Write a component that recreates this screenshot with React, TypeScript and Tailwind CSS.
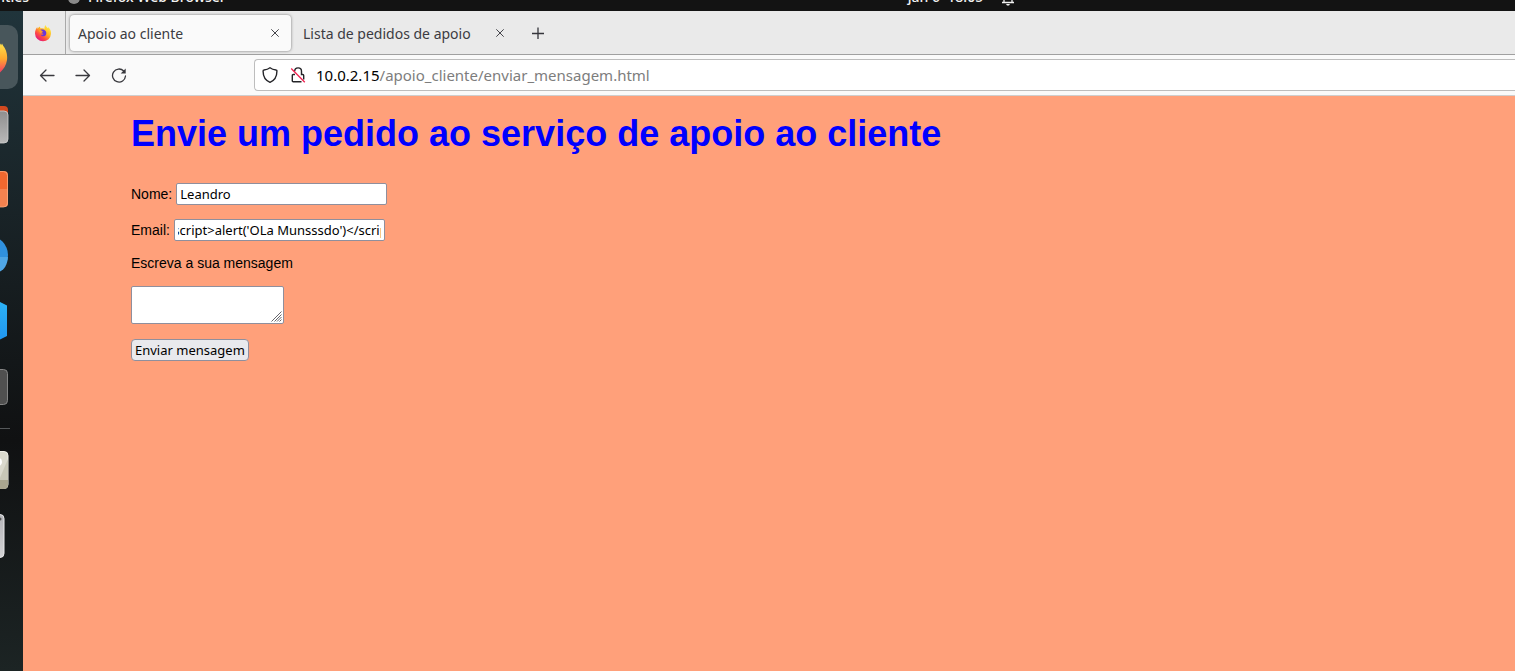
import { useLayoutEffect, useRef, type ReactNode } from "react";

function FirefoxLogo() {
  return (
    <svg width="18" height="18" viewBox="0 0 18 18" aria-hidden="true">
      <defs>
        <linearGradient id="flame" x1="0.85" y1="0.1" x2="0.2" y2="0.95">
          <stop offset="0" stopColor="#fff04a" />
          <stop offset="0.4" stopColor="#ffb01f" />
          <stop offset="0.7" stopColor="#ff4a44" />
          <stop offset="1" stopColor="#e01583" />
        </linearGradient>
      </defs>
      <path
        d="M11.600 1c.1 1.500 1.500 2.300 2.300 3.300.3-.3.400-.8.300-1.300 2 1.800 3 4 2.800 6.800A8 8 0 0 1 9 17.300 8 8 0 0 1 1 9.400c0-2.700 1-4.500 2.300-6.300 0 .9.100 1.300.400 1.700C4.500 3.500 5.200 3 6 2.500c-.1.800.2 1.500.6 1.900 1.500-.3 3-.3 4 .4-.2-1.500.1-2.800 1-3.800z"
        fill="url(#flame)"
      />
      <path d="M6 6c2-.9 4.700-.5 5.800 1.200.9 1.600.6 3.600-.7 4.500-1.700 1-3.900.4-4.500-1 1.300.4 2.300-.1 3-.8-.6-.4-1.600-.2-2.200-.7-.2-.8.600-1.200 1.300-1.400-.8-.7-1.800-.8-2.700-1.800z" fill="#6b35d9" />
      <path d="M4 5.300c1.200-.5 2.800 0 3.800 1.600L9.200 8c-1 .3-2 .8-2.100 1.500-1-.9-2.300-2.200-3.100-4.200z" fill="#ff9a2b" />
    </svg>
  );
}

function Cross() {
  return (
    <svg width="8" height="8" viewBox="0 0 8 8" fill="none" stroke="#45454b" strokeWidth="1" aria-hidden="true">
      <path d="M.3.3l7.400 7.400M7.700.3L.3 7.700" />
    </svg>
  );
}

function Arrow({ flip = false }: { flip?: boolean }) {
  return (
    <svg width="16" height="16" viewBox="0 0 16 16" fill="none" stroke="#38383d" strokeWidth="1.300" strokeLinecap="round" strokeLinejoin="round" aria-hidden="true">
      <path d={flip ? "M1 8.500h13.500M9 3L14.500 8.500 9 14" : "M15 8.500H1.500M7 3L1.500 8.500 7 14"} />
    </svg>
  );
}

function DockItem({ label, children }: { label: string; children: ReactNode }) {
  return (
    <button type="button" aria-label={label} className="block h-[66px] w-full shrink-0">
      <svg className="h-full w-full" viewBox="0 0 23 66" preserveAspectRatio="xMinYMin" aria-hidden="true">
        {children}
      </svg>
    </button>
  );
}

function Dock() {
  return (
    <nav aria-label="Dock" className="w-[23px] shrink-0 overflow-hidden bg-linear-to-b from-[#20343b] via-[#101112] via-65% to-[#1c2424] pt-[13px]">
      <svg width="0" height="0" className="absolute" aria-hidden="true">
        <defs>
          <linearGradient id="dockFlame" x1="0" y1="0" x2="0" y2="1">
            <stop offset="0" stopColor="#ffe14a" />
            <stop offset="0.5" stopColor="#ffa92e" />
            <stop offset="1" stopColor="#f5306a" />
          </linearGradient>
          <linearGradient id="files" x1="0" y1="0" x2="0" y2="1">
            <stop offset="0" stopColor="#8f8f8f" />
            <stop offset="1" stopColor="#b8b8b8" />
          </linearGradient>
          <linearGradient id="code" x1="0" y1="0" x2="0" y2="1">
            <stop offset="0" stopColor="#2cb2f5" />
            <stop offset="1" stopColor="#2196f0" />
          </linearGradient>
          <linearGradient id="disk" x1="0" y1="0" x2="0" y2="1">
            <stop offset="0" stopColor="#b4b4b8" />
            <stop offset="1" stopColor="#d2d2d4" />
          </linearGradient>
        </defs>
      </svg>
      <DockItem label="Firefox">
        <rect x="-40" y="1" width="58" height="64" rx="10" fill="#48565b" />
        <path d="M-2 23L.5 19.500l.5 2 1-2 1 2C6 25 7.700 30 7 36c-1 6-4 10.500-9 14z" fill="url(#dockFlame)" />
      </DockItem>
      <DockItem label="Files">
        <rect x="-20" y="16" width="28" height="30" rx="4" fill="#d2491f" />
        <rect x="-20" y="21" width="28" height="32" rx="4" fill="url(#files)" stroke="#d0d0d0" strokeWidth=".8" />
      </DockItem>
      <DockItem label="Software">
        <rect x="-20" y="15" width="28" height="36" rx="4" fill="#f1682f" />
        <path d="M-1 33h9v14a4 4 0 0 1-4 4h-5z" fill="#f4824f" />
        <rect x="-20" y="15.500" width="27.500" height="35.500" rx="4" fill="none" stroke="#f9ab80" strokeWidth=".8" />
      </DockItem>
      <DockItem label="Help">
        <circle cx="-11" cy="33" r="19" fill="#3091df" />
        <path d="M-1 35h8.900C7.500 43 4 48-1 50z" fill="#4fa6e6" />
      </DockItem>
      <DockItem label="Visual Studio Code">
        <path d="M-1 13.500l8 4v30.500l-8 4z" fill="url(#code)" />
      </DockItem>
      <DockItem label="Terminal">
        <rect x="-20" y="15.500" width="27.500" height="35" rx="4" fill="#505050" stroke="#858585" />
      </DockItem>
      <hr className="mt-2 mb-2 w-[10px] border-[#55585a]" />
      <DockItem label="Disks">
        <rect x="-20" y="14.500" width="28" height="37" rx="4" fill="#dad9cd" stroke="#f0efe8" />
        <path d="M-1 43L8 22v21z" fill="#c8c7b7" />
        <path d="M-1 43h9v5a4 4 0 0 1-4 4h-5z" fill="#a9a58f" />
        <circle cx="-2" cy="25" r="4" fill="#fff" />
      </DockItem>
      <DockItem label="Trash">
        <rect x="-20" y="11.500" width="24" height="43" rx="4" fill="url(#disk)" stroke="#e8e8ea" />
        <circle cx="0" cy="16" r="1.500" fill="#555" />
      </DockItem>
    </nav>
  );
}

function TopBar() {
  return (
    <header className="grid h-[11px] grid-cols-[1fr_auto_1fr] content-end overflow-hidden bg-[#131313] pb-1 text-sm leading-5 font-medium text-[#f2f2f2]">
      <div className="flex items-end">
        <span className="flex w-[29px] justify-end">Activities</span>
        <span className="mb-[3px] ml-[39px] size-3 rounded-full bg-[#8a8a8a]" />
        <span className="ml-2 whitespace-nowrap">Firefox Web Browser</span>
      </div>
      <time className="ml-[376px] whitespace-nowrap">jan 6&nbsp; 18:05</time>
      <div className="flex items-end pl-[18px]">
        <svg width="14" height="16" viewBox="0 0 14 16" fill="none" stroke="#f2f2f2" strokeWidth="1.300" aria-hidden="true">
          <path d="M1 11.500h12M3 11V6a4 4 0 0 1 8 0v5" />
          <path d="M5 13h4l-1 1.500H6z" fill="#f2f2f2" stroke="none" />
        </svg>
      </div>
    </header>
  );
}

function TabBar() {
  return (
    <div className="flex h-11 items-center border-b border-[#a0a0a0] bg-[#eaeaea] text-sm text-[#3c3c42]">
      <div className="flex h-full w-[43px] items-center justify-center border-r border-[#a9a9a9] pr-[2px]">
        <FirefoxLogo />
      </div>
      <div className="ml-1 flex h-9 w-[221px] items-center justify-between rounded-sm bg-[#fafafa] pr-3 pl-2 shadow-[0_0_3px_rgba(0,0,0,0.5)]">
        <a href="#apoio" className="pt-[2px]">Apoio ao cliente</a>
        <button type="button" aria-label="Fechar Apoio ao cliente">
          <Cross />
        </button>
      </div>
      <div className="flex h-9 w-[225px] items-center justify-between pr-3 pl-3">
        <a href="#lista" className="pt-[2px] whitespace-nowrap">Lista de pedidos de apoio</a>
        <button type="button" aria-label="Fechar Lista de pedidos de apoio">
          <Cross />
        </button>
      </div>
      <button type="button" aria-label="Novo separador" className="ml-4">
        <svg width="12" height="12" viewBox="0 0 12 12" stroke="#35353b" strokeWidth="1.300" aria-hidden="true">
          <path d="M6 .500v12M0 6.500h12" />
        </svg>
      </button>
    </div>
  );
}

function Toolbar() {
  return (
    <div className="flex h-[41px] items-center border-b border-[#cfcfcf] bg-[#fafafa]">
      <div className="flex w-[231px] gap-5 pl-4">
        <button type="button" aria-label="Recuar"><Arrow /></button>
        <button type="button" aria-label="Avançar"><Arrow flip /></button>
        <button type="button" aria-label="Recarregar">
          <svg width="16" height="16" viewBox="0 0 16 16" fill="none" stroke="#38383d" strokeWidth="1.300" strokeLinecap="round" aria-hidden="true">
            <path d="M12.700 4A6.500 6.500 0 1 0 14.500 9" />
            <path d="M14.700 1.500v5H9.700z" fill="#38383d" stroke="none" />
          </svg>
        </button>
      </div>
      <div className="flex h-8 flex-1 items-center rounded-l-sm border border-r-0 border-[#bdbdbd] bg-white pl-[7px]">
        <svg width="16" height="16" viewBox="0 0 16 16" fill="none" stroke="#242428" strokeWidth="1.400" strokeLinejoin="round" aria-hidden="true">
          <path d="M8 .8C6.500 2 4.500 2.800 2 3c-.6 0-.9.400-.9.900C1 9.500 3.500 13.500 8 15.300c4.500-1.800 7-5.800 6.900-11.400 0-.5-.3-.9-.9-.9C11.500 2.800 9.500 2 8 .8z" />
        </svg>
        <svg className="ml-3" width="16" height="16" viewBox="0 0 16 16" fill="none" aria-hidden="true">
          <path d="M4.700 4.300a3.400 3.400 0 0 1 6.800 0v3.200h1.300c.5 0 .9.400.9.900v4M11.500 14.800H3.200c-.5 0-.9-.4-.9-.9V8.400c0-.5.400-.9.900-.9H5" stroke="#242428" strokeWidth="1.400" />
          <path d="M1.200 1.500l13.600 13.700" stroke="#f0204f" strokeWidth="1.300" />
        </svg>
        <p className="ml-[10px] text-[15px] leading-5 whitespace-nowrap text-[#7d7d7d]">
          <span className="text-black">10.0.2.15</span>/apoio_cliente/enviar_mensagem.html
        </p>
      </div>
    </div>
  );
}

const fieldClass = "h-[22px] w-[211px] rounded-xs border border-[#8f8f9d] bg-white px-[3px] font-['Noto_Sans',sans-serif] text-[13px] text-black outline-none";

function SupportForm() {
  const emailRef = useRef<HTMLInputElement>(null);
  useLayoutEffect(() => {
    if (emailRef.current) emailRef.current.scrollLeft = 12;
  }, []);
  return (
    <main className="flex-1 bg-[#ffa07a] pt-[15px] pl-[108px] font-['Liberation_Sans',Arial,sans-serif] text-sm text-black">
      <h1 className="text-[36px] leading-[46px] font-bold text-[#0000ff]">Envie um pedido ao serviço de apoio ao cliente</h1>
      <form onSubmit={(e) => e.preventDefault()} className="mt-[26px] flex flex-col items-start">
        <div className="flex items-center gap-1">
          <label htmlFor="nome">Nome:</label>
          <input id="nome" type="text" defaultValue="Leandro" className={fieldClass} />
        </div>
        <div className="mt-[14px] flex items-center gap-1">
          <label htmlFor="email">Email:</label>
          <input id="email" ref={emailRef} type="text" defaultValue="<script>alert('OLa Munsssdo')</script>" className={fieldClass} />
        </div>
        <label htmlFor="mensagem" className="mt-3">Escreva a sua mensagem</label>
        <div className="relative mt-[13px]">
          <textarea id="mensagem" className="block h-[38px] w-[153px] resize-none rounded-xs border border-[#8f8f9d] bg-white outline-none" />
          <svg className="pointer-events-none absolute right-[2px] bottom-[2px]" width="11" height="11" viewBox="0 0 11 11" stroke="#66666c" strokeWidth="1" aria-hidden="true">
            <path d="M.5 10.500l10-10M3.500 10.500l7-7M6 10.500l4.500-4.500M8.500 10.500l2-2" />
          </svg>
        </div>
        <button type="submit" className="mt-[15px] h-[22px] rounded-sm border border-[#8f8f9d] bg-[#e9e9ed] px-[3px] font-['Noto_Sans',sans-serif] text-[13px] leading-5">
          Enviar mensagem
        </button>
      </form>
    </main>
  );
}

export default function App() {
  return (
    <div className="flex min-h-screen flex-col overflow-hidden font-['Noto_Sans',sans-serif]">
      <TopBar />
      <div className="flex flex-1">
        <Dock />
        <div className="flex min-w-0 flex-1 flex-col">
          <TabBar />
          <Toolbar />
          <SupportForm />
        </div>
      </div>
    </div>
  );
}
